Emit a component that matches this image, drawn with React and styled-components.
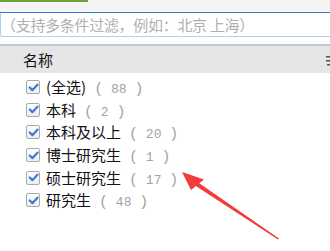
import React from 'react';
import styled, { createGlobalStyle } from 'styled-components';

const Global = createGlobalStyle`
  html, body {
    margin: 0;
    padding: 0;
    background: #fff;
  }
  body {
    font-family: "Noto Sans CJK SC", "Liberation Sans", sans-serif;
    width: 330px;
    height: 251px;
    overflow: hidden;
  }
`

const Page = styled.div`
  position: relative;
  width: 330px;
  height: 251px;
  overflow: hidden;
`

const TopStrip = styled.div`
  height: 12px;
  background: #f4f4f4;
`

const GreenTab = styled.div`
  width: 88px;
  height: 2px;
  background: #6ba23a;
`

const SearchWrap = styled.div`
  border-top: 1px solid #3a7ec0;
  height: 32px;
  box-sizing: border-box;
`

const SearchInput = styled.div`
  height: 24px;
  box-sizing: border-box;
  border-left: 1px solid #b2d0ec;
  border-bottom: 1px solid #b2d0ec;
  border-bottom-left-radius: 3px;
  padding-left: 0;
  display: flex;
  align-items: center;
  font-size: 15px;
  color: #b0b0b0;
  letter-spacing: -0.3px;
  white-space: nowrap;
`

const Header = styled.div`
  border-top: 2px solid #c3c9d0;
  height: 27px;
  background: #e5e5e5;
  display: flex;
  align-items: center;
  justify-content: space-between;
  padding-left: 23px;
  font-size: 15px;
  color: #111;
`

const MenuGlyph = styled.svg`
  width: 4px;
  height: 10px;
  margin-top: 2px;
`

const List = styled.div`
  padding-top: 3px;
`

const Row = styled.div`
  height: 22.6px;
  display: flex;
  align-items: center;
  padding-left: 26px;
  gap: 6px;
  font-size: 15px;
  color: #111;
  white-space: nowrap;
`

const Box = styled.span`
  width: 14px;
  height: 14px;
  box-sizing: border-box;
  border: 1px solid #a9a9a9;
  border-radius: 2px;
  background: linear-gradient(#fdfdfd, #eeeeee);
  display: flex;
  align-items: center;
  justify-content: center;
  flex-shrink: 0;
`

const Count = styled.span`
  color: #a3a3a3;
  margin-left: 8px;
  font-family: "Liberation Mono", monospace;
  font-size: 13px;
  white-space: pre;
`

const Paren = styled.span`
  font-size: 15px;
  font-weight: 300;
`

const Arrow = styled.svg`
  position: absolute;
  left: 0;
  top: 0;
  width: 330px;
  height: 251px;
  pointer-events: none;
`

const items = [
  { label: '(全选)', count: 88 },
  { label: '本科', count: 2 },
  { label: '本科及以上', count: 20 },
  { label: '博士研究生', count: 1 },
  { label: '硕士研究生', count: 17 },
  { label: '研究生', count: 48 },
];

const Check = () => (
  <Box>
    <svg width="11" height="11" viewBox="0 0 10 10">
      <path d="M1.6 5 L4 7.4 L8.6 2.4" fill="none" stroke="#3f7bd6" strokeWidth="2" strokeLinecap="round" strokeLinejoin="round" />
    </svg>
  </Box>
);

const App = () => (
  <Page>
    <Global />
    <TopStrip>
      <GreenTab />
    </TopStrip>
    <SearchWrap>
      <SearchInput>（支持多条件过滤，例如：北京 上海）</SearchInput>
    </SearchWrap>
    <Header>
      <span>名称</span>
      <MenuGlyph viewBox="0 0 4 10">
        <rect x="0" y="0" width="4" height="1.5" fill="#555" />
        <rect x="0" y="4" width="4" height="1.5" fill="#555" />
        <rect x="1" y="8" width="3" height="1.5" fill="#555" />
      </MenuGlyph>
    </Header>
    <List>
      {items.map((it) => (
        <Row key={it.label}>
          <Check />
          <span>
            {it.label}
            <Count>
              <Paren>(</Paren>{` ${it.count} `}<Paren>)</Paren>
            </Count>
          </span>
        </Row>
      ))}
    </List>
    <Arrow viewBox="0 0 330 251">
      <polygon points="278,239.5 279,238.5 196,181 193.5,184.5" fill="#f23b3b" />
      <polygon points="182,172 204,179.5 191,190" fill="#f23b3b" />
    </Arrow>
  </Page>
);

export default App;
